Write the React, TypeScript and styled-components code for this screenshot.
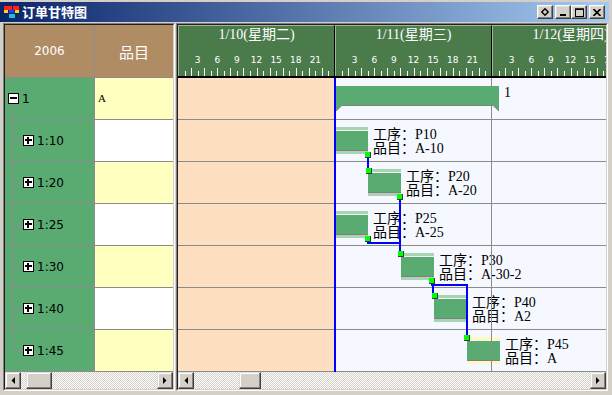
import React from 'react';
import styled, { createGlobalStyle } from 'styled-components';

const GlobalStyle = createGlobalStyle`
  html, body {
    margin: 0;
    padding: 0;
    background: #d4d0c8;
  }
  #root {
    width: 612px;
    height: 395px;
    overflow: hidden;
  }
`;

const FACE = '#d4d0c8';
const GRID = '#8c8c8c';
const GREEN = '#5aab72';
const HEADER_GREEN = '#4b7b4b';
const SERIF_CJK = `"Liberation Serif", "Noto Sans CJK SC", serif`;
const SANS = `"DejaVu Sans", "Noto Sans CJK SC", sans-serif`;
const HOUR = 157 / 24;

const Window = styled.div`
  width: 612px;
  height: 395px;
  box-sizing: border-box;
  padding-top: 2px;
  background: ${FACE};
  display: flex;
  flex-direction: column;
`;

const TitleBar = styled.div`
  height: 20px;
  margin-right: 3px;
  padding: 0 4px 0 4px;
  display: flex;
  align-items: center;
  background: linear-gradient(to right, #0a246a, #a6caf0);
`;

const TitleText = styled.span`
  flex: 1;
  margin-left: 2px;
  color: #fff;
  font: bold 13px "Noto Sans CJK SC", sans-serif;
  line-height: 20px;
`;

const CaptionButton = styled.div<{ $gap?: boolean }>`
  width: 16px;
  height: 14px;
  box-sizing: border-box;
  margin-left: ${p => (p.$gap ? 2 : 0)}px;
  background: ${FACE};
  border: 1px solid;
  border-color: #fff #404040 #404040 #fff;
  box-shadow: inset -1px -1px #808080, inset 1px 1px #dfdfdf;
  display: flex;
  align-items: center;
  justify-content: center;
`;

const Body = styled.div`
  flex: 1;
  min-height: 0;
  display: flex;
  gap: 1px;
  padding: 1px 4px 4px 3px;
`;

const Panel = styled.div<{ $width: number }>`
  width: ${p => p.$width}px;
  box-sizing: border-box;
  border: 1px solid;
  border-color: #808080 #fff #fff #808080;
  display: flex;
`;

const PanelInner = styled.div`
  flex: 1;
  min-width: 0;
  border: 1px solid;
  border-color: #202020 ${FACE} ${FACE} #202020;
  display: flex;
  flex-direction: column;
  overflow: hidden;
`;

/* ---------- left tree table ---------- */

const LeftHeader = styled.div`
  height: 53px;
  box-sizing: border-box;
  border-bottom: 1px solid ${GRID};
  display: grid;
  grid-template-columns: 90px 78px;
`;

const HeaderCell = styled.div<{ $size: number; $divider?: boolean }>`
  background: #b08c64;
  color: #fff;
  font: ${p => p.$size}px ${SANS};
  display: flex;
  align-items: center;
  justify-content: center;
  border-right: ${p => (p.$divider ? `1px solid ${GRID}` : 'none')};
`;

const LeftRow = styled.div`
  height: 42px;
  box-sizing: border-box;
  border-bottom: 1px solid ${GRID};
  display: grid;
  grid-template-columns: 90px 78px;
`;

type TreeKind = 'root' | 'child' | 'last';

const treeLines = (kind: TreeKind) => {
  const g = `linear-gradient(${GRID}, ${GRID})`;
  if (kind === 'root') return `${g} 8px 100% / 1px 50% no-repeat`;
  if (kind === 'last') return `${g} 8px 0 / 1px 50% no-repeat, ${g} 8px 50% / 10px 1px no-repeat`;
  return `${g} 8px 0 / 1px 100% no-repeat, ${g} 8px 50% / 10px 1px no-repeat`;
};

const TreeCell = styled.div<{ $kind: TreeKind }>`
  display: flex;
  align-items: center;
  gap: 3px;
  padding-left: ${p => (p.$kind === 'root' ? 3 : 18)}px;
  background: ${p => treeLines(p.$kind)}, ${GREEN};
  border-right: 1px solid ${GRID};
  font: 12px ${SANS};
  color: #000;
`;

const Expander = styled.span<{ $open?: boolean }>`
  position: relative;
  flex: none;
  width: 11px;
  height: 11px;
  box-sizing: border-box;
  border: 1px solid #000;
  background: #fff;

  &::before {
    content: '';
    position: absolute;
    left: 1px;
    right: 1px;
    top: 3px;
    height: 2px;
    background: #000;
  }

  &::after {
    content: '';
    display: ${p => (p.$open ? 'none' : 'block')};
    position: absolute;
    top: 1px;
    bottom: 1px;
    left: 3px;
    width: 2px;
    background: #000;
  }
`;

const ItemCell = styled.div<{ $alt: boolean }>`
  background: ${p => (p.$alt ? '#ffffc0' : '#ffffff')};
  font: 11px ${SERIF_CJK};
  padding: 14px 0 0 3px;
  box-sizing: border-box;
`;

/* ---------- scroll bars ---------- */

const ScrollBar = styled.div`
  height: 17px;
  flex: none;
  display: flex;
`;

const ScrollTrack = styled.div`
  flex: 1;
  display: flex;
  background: repeating-conic-gradient(${FACE} 0 25%, #ffffff 0 50%) 0 0 / 2px 2px;
`;

const Bevel = styled.div`
  height: 17px;
  box-sizing: border-box;
  background: ${FACE};
  border: 1px solid;
  border-color: #dfdfdf #404040 #404040 #dfdfdf;
  box-shadow: inset -1px -1px #808080, inset 1px 1px #fff;
`;

const ArrowButton = styled(Bevel)`
  width: 16px;
  flex: none;
  display: flex;
  align-items: center;
  justify-content: center;
`;

const Thumb = styled(Bevel)<{ $offset: number; $size: number }>`
  width: ${p => p.$size}px;
  margin-left: ${p => p.$offset}px;
`;

const Arrow = ({ dir }: { dir: 'left' | 'right' }) => (
  <svg width="4" height="7" viewBox="0 0 4 7">
    <polygon points={dir === 'left' ? '4,0 4,7 0.5,3.5' : '0,0 0,7 3.5,3.5'} fill="#000" />
  </svg>
);

const HScroll = ({ offset, size }: { offset: number; size: number }) => (
  <ScrollBar>
    <ArrowButton><Arrow dir="left" /></ArrowButton>
    <ScrollTrack>
      <Thumb $offset={offset} $size={size} />
    </ScrollTrack>
    <ArrowButton><Arrow dir="right" /></ArrowButton>
  </ScrollBar>
);

/* ---------- gantt ---------- */

const GanttHeader = styled.div`
  height: 53px;
  box-sizing: border-box;
  border-bottom: 2px solid #000;
  display: flex;
  overflow: hidden;
  background: ${HEADER_GREEN};
`;

const DayCell = styled.div`
  flex: 0 0 157px;
  box-sizing: border-box;
  border-top: 1px solid #9bb89b;
  border-left: 1px solid #9bb89b;
  border-right: 1px solid #000;
  display: flex;
  flex-direction: column;
`;

const DayTitle = styled.div`
  color: #fff;
  font: 14px ${SERIF_CJK};
  line-height: 16px;
  padding-top: 1px;
  text-align: center;
  white-space: nowrap;
`;

const Ruler = styled.svg`
  display: block;
  margin-top: auto;
`;

const GanttBody = styled.div`
  position: relative;
  height: 294px;
  flex: none;
  background: linear-gradient(to right, #ffdfc2 0 156px, #f5f9ff 156px);
`;

const GanttRow = styled.div`
  height: 42px;
  box-sizing: border-box;
  border-bottom: 1px solid ${GRID};
`;

const TaskBar = styled.div<{ $selected?: boolean }>`
  position: absolute;
  width: 33px;
  height: 27px;
  background: linear-gradient(
    to bottom,
    ${p => (p.$selected ? '#fff8c0' : '#a9d3b2')} 0 3px,
    #f2f8f2 3px 4px,
    ${GREEN} 4px 23px,
    #808080 23px 24px,
    ${p => (p.$selected ? '#fff8c0' : '#a9d3b2')} 24px 27px
  );
`;

const TaskLabel = styled.div`
  position: absolute;
  font: 14px ${SERIF_CJK};
  line-height: 14px;
  color: #000;
  white-space: pre;
`;

const Overlay = styled.svg`
  position: absolute;
  left: 0;
  top: 0;
  pointer-events: none;
`;

const leftRows: { label: string; kind: TreeKind; item?: string }[] = [
  { label: '1', kind: 'root', item: 'A' },
  { label: '1:10', kind: 'child' },
  { label: '1:20', kind: 'child' },
  { label: '1:25', kind: 'child' },
  { label: '1:30', kind: 'child' },
  { label: '1:40', kind: 'child' },
  { label: '1:45', kind: 'last' },
];

const days = ['1/10(星期二)', '1/11(星期三)', '1/12(星期四)'];

const tasks = [
  { op: 'P10', item: 'A-10', left: 157, row: 1 },
  { op: 'P20', item: 'A-20', left: 190, row: 2 },
  { op: 'P25', item: 'A-25', left: 157, row: 3 },
  { op: 'P30', item: 'A-30-2', left: 223, row: 4 },
  { op: 'P40', item: 'A2', left: 256, row: 5 },
  { op: 'P45', item: 'A', left: 289, row: 6, selected: true },
];

// links drawn as [x, y, w, h] blue strokes and green end markers
const linkLines = [
  [189, 79, 2, 11],
  [221, 122, 2, 52],
  [189, 164, 34, 2],
  [253, 206, 37, 2],
  [288, 206, 2, 52],
  [254, 206, 2, 10],
];

const linkDots = [
  [187, 74],
  [188, 90],
  [219, 116],
  [187, 158],
  [220, 173],
  [251, 200],
  [254, 215],
  [286, 257],
];

const DayRuler = () => {
  const ticks = Array.from({ length: 23 }, (_, i) => i + 1);
  return (
    <Ruler width="155" height="24">
      {ticks.map(h => {
        const x = Math.round(h * HOUR - 1) + 0.5;
        const tall = h % 2 === 0;
        return <line key={h} x1={x} x2={x} y1={tall ? 16 : 19} y2={24} stroke="#fff" strokeWidth="1" />;
      })}
      {ticks
        .filter(h => h % 3 === 0)
        .map(h => (
          <text
            key={h}
            x={h * HOUR - 1}
            y="11"
            fill="#fff"
            fontSize="9"
            fontFamily="DejaVu Sans, sans-serif"
            textAnchor="middle"
          >
            {h}
          </text>
        ))}
    </Ruler>
  );
};

const App: React.FC = () => {
  return (
    <Window>
      <GlobalStyle />
      <TitleBar>
        <svg width="16" height="13" viewBox="0 0 16 13">
          <rect x="0" y="0" width="8" height="4" fill="#ff2020" />
          <rect x="9" y="0" width="6" height="4" fill="#ff2020" />
          <rect x="0" y="4" width="4" height="3" fill="#ffd800" />
          <rect x="11" y="4" width="4" height="3" fill="#ffd800" />
          <rect x="5" y="4" width="5" height="3" fill="#2040ff" />
          <rect x="5" y="8" width="6" height="4" fill="#18c0d8" />
        </svg>
        <TitleText>订单甘特图</TitleText>
        <CaptionButton>
          <svg width="8" height="8" viewBox="0 0 8 8">
            <path d="M4 0.8 L7.2 4 L4 7.2 L0.8 4 Z" fill="none" stroke="#000" strokeWidth="1.4" />
          </svg>
        </CaptionButton>
        <CaptionButton $gap>
          <svg width="8" height="8" viewBox="0 0 8 8">
            <rect x="1" y="6" width="6" height="2" fill="#000" />
          </svg>
        </CaptionButton>
        <CaptionButton>
          <svg width="9" height="9" viewBox="0 0 9 9">
            <rect x="0.5" y="1" width="8" height="7.5" fill="none" stroke="#000" strokeWidth="1" />
            <rect x="0" y="0.5" width="9" height="1.5" fill="#000" />
          </svg>
        </CaptionButton>
        <CaptionButton $gap>
          <svg width="8" height="7" viewBox="0 0 8 7">
            <path d="M0.5 0 L7.5 7 M7.5 0 L0.5 7" stroke="#000" strokeWidth="1.6" />
          </svg>
        </CaptionButton>
      </TitleBar>

      <Body>
        <Panel $width={172}>
          <PanelInner>
            <LeftHeader>
              <HeaderCell $size={12} $divider>2006</HeaderCell>
              <HeaderCell $size={15}>品目</HeaderCell>
            </LeftHeader>
            {leftRows.map((row, i) => (
              <LeftRow key={row.label}>
                <TreeCell $kind={row.kind}>
                  <Expander $open={row.kind === 'root'} />
                  {row.label}
                </TreeCell>
                <ItemCell $alt={i % 2 === 0}>{row.item}</ItemCell>
              </LeftRow>
            ))}
            <HScroll offset={5} size={26} />
          </PanelInner>
        </Panel>

        <Panel $width={432}>
          <PanelInner>
            <GanttHeader>
              {days.map(d => (
                <DayCell key={d}>
                  <DayTitle>{d}</DayTitle>
                  <DayRuler />
                </DayCell>
              ))}
            </GanttHeader>
            <GanttBody>
              {leftRows.map(r => (
                <GanttRow key={r.label} />
              ))}
              {tasks.map(t => {
                const top = t.row * 42 + 7;
                return (
                  <React.Fragment key={t.op}>
                    <TaskBar $selected={t.selected} style={{ left: t.left, top }} />
                    <TaskLabel style={{ left: t.left + 38, top: top + 1 }}>
                      {`工序：${t.op}\n品目：${t.item}`}
                    </TaskLabel>
                  </React.Fragment>
                );
              })}
              <TaskLabel style={{ left: 326, top: 8 }}>1</TaskLabel>
              <Overlay width="428" height="294">
                <rect x="313" y="0" width="1" height="294" fill={GRID} />
                <rect x="156" y="0" width="2" height="294" fill="#0000ff" />
                <polygon points="158,8 321,8 321,33 315,27 164,27 158,33" fill={GREEN} />
                <path d="M158 33 L164 27.5 L315 27.5 L321 33" fill="none" stroke="#808080" strokeWidth="1" />
                {linkLines.map(([x, y, w, h], i) => (
                  <rect key={i} x={x} y={y} width={w} height={h} fill="#0000ff" />
                ))}
                {linkDots.map(([x, y], i) => (
                  <g key={i}>
                    <rect x={x} y={y} width={6} height={6} fill="#3a3a3a" />
                    <rect x={x} y={y} width={5} height={5} fill="#00ff00" />
                  </g>
                ))}
              </Overlay>
            </GanttBody>
            <HScroll offset={45} size={22} />
          </PanelInner>
        </Panel>
      </Body>
    </Window>
  );
};

export default App;
